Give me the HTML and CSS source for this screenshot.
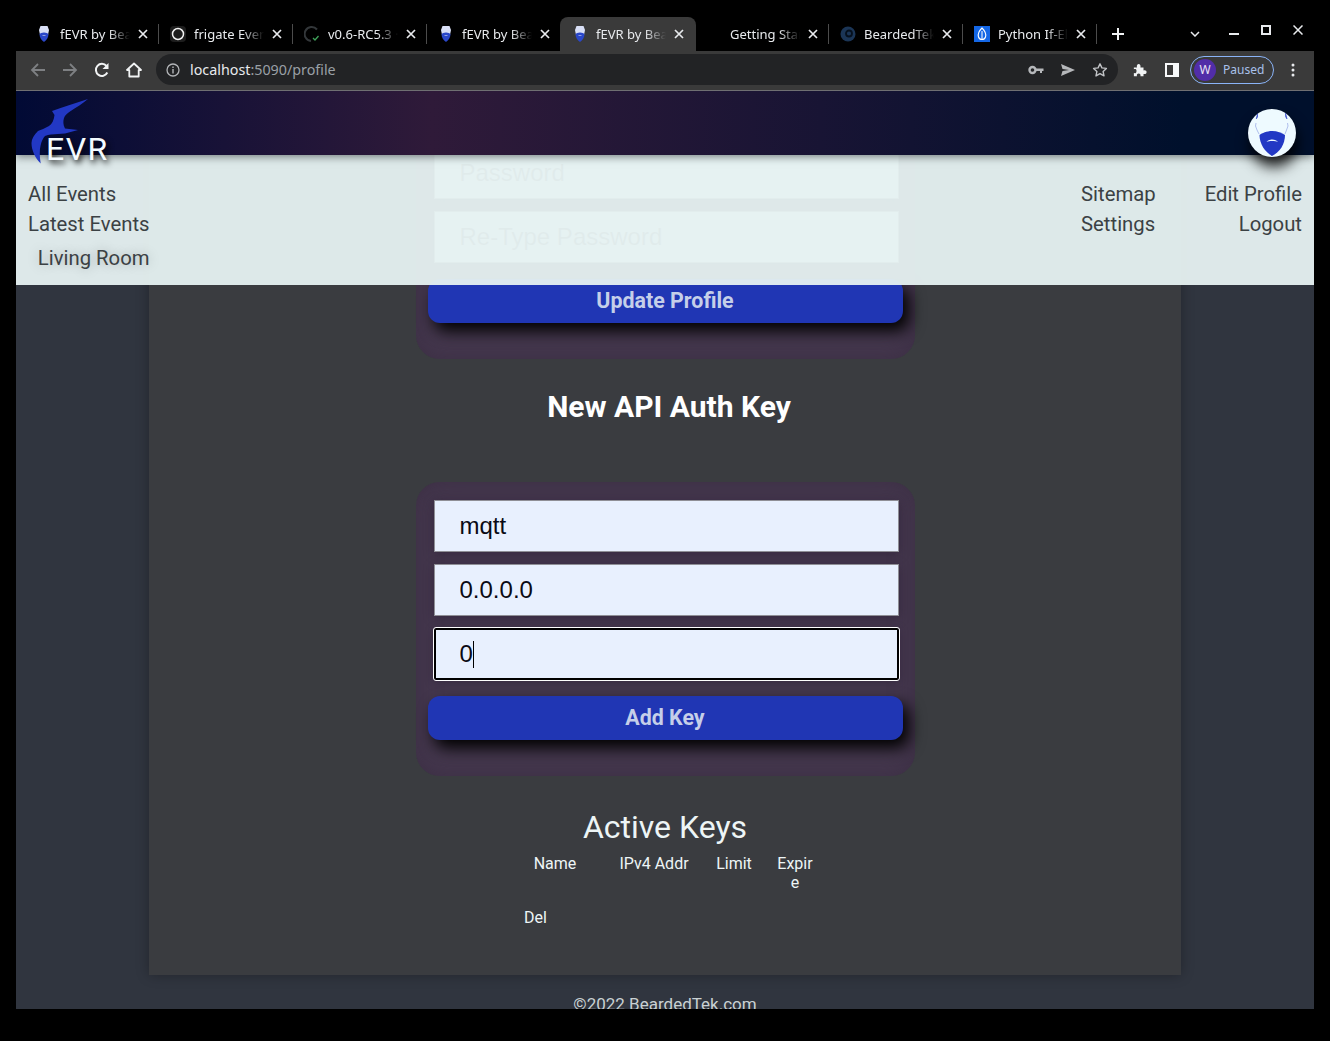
FILE: index.html
```html
<!DOCTYPE html>
<html lang="en">
<head>
    <meta charset="UTF-8">
    <meta name="viewport" content="width=device-width, initial-scale=1.0">
    <title>fEVR by BeardedTek</title>
    <link rel="stylesheet" href="styles.css">
</head>
<body>
    <svg class="defs" width="0" height="0">
        <symbol id="fav-beard" viewBox="0 0 16 16">
            <path d="M4.500 0h7l1.500 4-1 5H4L3 4z" fill="#d9dff6"/>
            <path d="M3.500 8c1-.5 2-1.500 4.500-1.500S11.500 7.500 12.500 8c0 3.500-2 6.500-4.500 8-2.500-1.500-4.500-4.500-4.500-8z" fill="#2a47c9"/>
            <path d="M5.800 10c1.400-1.300 3-1.300 4.400 0-1.400-.5-3-.5-4.400 0z" fill="#c9d3f5"/>
        </symbol>
        <symbol id="tab-x" viewBox="0 0 10 10">
            <path d="M1 1l8 8M9 1l-8 8" stroke="#e8eaed" stroke-width="1.700" fill="none"/>
        </symbol>
    </svg>

    <div class="window">
        <div class="tabstrip">
            <div class="tab">
                <svg class="favicon"><use href="#fav-beard"/></svg>
                <span class="tab-title">fEVR by BeardedTek</span>
                <svg class="tab-close"><use href="#tab-x"/></svg>
            </div>
            <div class="tab">
                <svg class="favicon" viewBox="0 0 16 16"><rect width="16" height="16" rx="4" fill="#1d1d1d"/><circle cx="8" cy="8" r="5.500" fill="none" stroke="#f2f2f2" stroke-width="1.500"/></svg>
                <span class="tab-title">frigate Events</span>
                <svg class="tab-close"><use href="#tab-x"/></svg>
            </div>
            <div class="tab">
                <svg class="favicon" viewBox="0 0 16 16"><path d="M13 3.500A7 7 0 1 0 7 15" fill="none" stroke="#33373a" stroke-width="2"/><path d="M9 12l2 2 3.500-4" fill="none" stroke="#3fa35a" stroke-width="1.300"/></svg>
                <span class="tab-title">v0.6-RC5.3 · Releases</span>
                <svg class="tab-close"><use href="#tab-x"/></svg>
            </div>
            <div class="tab tab-before-active">
                <svg class="favicon"><use href="#fav-beard"/></svg>
                <span class="tab-title">fEVR by BeardedTek</span>
                <svg class="tab-close"><use href="#tab-x"/></svg>
            </div>
            <div class="tab tab-active">
                <svg class="favicon"><use href="#fav-beard"/></svg>
                <span class="tab-title">fEVR by BeardedTek</span>
                <svg class="tab-close"><use href="#tab-x"/></svg>
            </div>
            <div class="tab">
                <span class="favicon"></span>
                <span class="tab-title">Getting Started</span>
                <svg class="tab-close"><use href="#tab-x"/></svg>
            </div>
            <div class="tab">
                <svg class="favicon" viewBox="0 0 16 16"><circle cx="8" cy="8" r="7.500" fill="#1b3556"/><circle cx="9" cy="7.500" r="3" fill="none" stroke="#06101d" stroke-width="1.800"/></svg>
                <span class="tab-title">BeardedTek</span>
                <svg class="tab-close"><use href="#tab-x"/></svg>
            </div>
            <div class="tab">
                <svg class="favicon" viewBox="0 0 16 16"><rect width="16" height="16" fill="#1467e6"/><path d="M8 2c3 3 4.500 6 3.500 9-.5 1.500-2 2.500-3.500 2.500S5 12.500 4.500 11C3.500 8 5 5 8 2z" fill="none" stroke="#fff" stroke-width="1.100"/><path d="M8 5v8" stroke="#fff"/></svg>
                <span class="tab-title">Python If-Else</span>
                <svg class="tab-close"><use href="#tab-x"/></svg>
            </div>
            <svg class="new-tab" viewBox="0 0 12 12"><path d="M6 0v12M0 6h12" stroke="#f1f3f4" stroke-width="2"/></svg>
            <div class="win-controls">
                <svg class="win-chevron" viewBox="0 0 10 6"><path d="M1 1l4 4 4-4" fill="none" stroke="#e8eaed" stroke-width="1.500"/></svg>
                <svg class="win-min" viewBox="0 0 10 2"><path d="M0 1h10" stroke="#e8eaed" stroke-width="2"/></svg>
                <svg class="win-max" viewBox="0 0 10 10"><rect x="1" y="1" width="8" height="8" fill="none" stroke="#e8eaed" stroke-width="2"/></svg>
                <svg class="win-close" viewBox="0 0 10 10"><path d="M.500.500l9 9M9.500.500l-9 9" stroke="#e8eaed" stroke-width="1.500"/></svg>
            </div>
        </div>

        <div class="toolbar">
            <svg class="tool-icon" viewBox="0 0 16 16"><path d="M15 8H2M8 2L2 8l6 6" fill="none" stroke="#7e8083" stroke-width="1.800"/></svg>
            <svg class="tool-icon" viewBox="0 0 16 16"><path d="M1 8h13M8 2l6 6-6 6" fill="none" stroke="#7e8083" stroke-width="1.800"/></svg>
            <svg class="tool-icon" viewBox="0 0 16 16"><path d="M13.300 10.500A6 6 0 1 1 12.500 4" fill="none" stroke="#f1f3f4" stroke-width="2"/><path d="M14.500 1v6h-6z" fill="#f1f3f4"/></svg>
            <svg class="tool-icon" viewBox="0 0 16 16"><path d="M8 1.500L1 8h2.300v6.500h9.400V8H15z" fill="none" stroke="#f1f3f4" stroke-width="1.800" stroke-linejoin="round"/></svg>
            <div class="omnibox">
                <svg class="omni-info" viewBox="0 0 14 14"><circle cx="7" cy="7" r="6" fill="none" stroke="#b3b5b8" stroke-width="1.300"/><path d="M7 6v4.500M7 3.500v1.500" stroke="#b3b5b8" stroke-width="1.400"/></svg>
                <span class="url"><span class="url-host">localhost</span>:5090/profile</span>
                <div class="omni-actions">
                    <svg class="omni-icon" viewBox="0 0 16 16"><circle cx="4.500" cy="8" r="3" fill="none" stroke="#b5b7ba" stroke-width="2.400"/><path d="M7 6.500h8.500v2.500H14v2h-2V9H7z" fill="#b5b7ba"/></svg>
                    <svg class="omni-icon" viewBox="0 0 16 16"><path d="M1 2l14 6-14 6 1.500-5L9 8 2.500 7z" fill="#b5b7ba"/></svg>
                    <svg class="omni-icon" viewBox="0 0 16 16"><path d="M8 1.800l1.900 4.100 4.500.5-3.300 3 .9 4.500L8 11.600l-4 2.300.9-4.500-3.300-3 4.500-.5z" fill="none" stroke="#c2c4c7" stroke-width="1.400" stroke-linejoin="round"/></svg>
                </div>
            </div>
            <svg class="ext-icon" viewBox="0 0 16 16"><path d="M1 5h3.500C4 2.500 5 1 6.500 1S9 2.500 8.500 5H12v3.500c2.500-.5 3.500.5 3.500 2s-1 2.500-3.500 2V15H8.500c.5-2-.5-3-2-3s-2.500 1-2 3H1v-3.500c2 .5 3-.5 3-2.500s-1-2.500-3-2z" fill="#f1f3f4"/></svg>
            <svg class="ext-icon" viewBox="0 0 14 14"><path d="M0 0h14v14H0zM2 2v10h6V2z" fill="#f8f9fa" fill-rule="evenodd"/></svg>
            <div class="profile-pill"><span class="profile-avatar">W</span><span class="profile-state">Paused</span></div>
            <svg class="kebab" viewBox="0 0 4 14"><circle cx="2" cy="2" r="1.500" fill="#e8eaed"/><circle cx="2" cy="7" r="1.500" fill="#e8eaed"/><circle cx="2" cy="12" r="1.500" fill="#e8eaed"/></svg>
        </div>

        <div class="viewport">
            <div class="site-nav">
                <header class="site-header">
                    <a class="logo">
                        <svg class="logo-bird" viewBox="0 0 60 68">
                            <path d="M58 1C46 5 33 9 22 13L24.500 17C24 22 22 26 19 28 15 30 11 32 8 33 4 37 1.500 41 1.500 45 1.500 52 5 60 10.700 65.500 9.500 58 9.500 52 10.500 48 11.500 43 13 40 15 38 17 37 19 36.500 21 36.500L35 35.500 48 32 35 30.500C33 27 33 23 34 20 35 17 37 15.500 40 13.500 46 9.500 52 6 58 1Z" fill="#2238c4"/>
                        </svg>
                        <span class="logo-text">EVR</span>
                    </a>
                    <div class="avatar">
                        <svg viewBox="0 0 48 48" width="48" height="48">
                            <path d="M11.500 26C14 24 19 22 24.300 22 29 22 34 24 37 26 37 35 32 43 24 47 17 43 11.500 35 11.500 26Z" fill="#2238c4"/>
                            <path d="M18.500 33C20.500 29.500 28 29.500 30 33 27 31.800 21.500 31.800 18.500 33Z" fill="#eefaff"/>
                            <path d="M9.500 4L8.300 10 9.500 8ZM37.500 4L39 10 37.700 8Z" fill="#2238c4" stroke="#2238c4" stroke-width=".5"/>
                            <path d="M8 14L7.500 17 9 21 11 25M39.500 14L40 17 38.500 21 37 25" fill="none" stroke="#6f80d8" stroke-width=".5"/>
                        </svg>
                    </div>
                </header>
                <nav class="menu">
                    <div class="menu-col">
                        <a>All Events</a>
                        <a>Latest Events</a>
                        <a class="menu-camera">Living Room</a>
                    </div>
                    <div class="menu-right">
                        <div class="menu-col">
                            <a>Sitemap</a>
                            <a>Settings</a>
                        </div>
                        <div class="menu-col menu-col-end">
                            <a>Edit Profile</a>
                            <a>Logout</a>
                        </div>
                    </div>
                </nav>
            </div>

            <main class="sheet">
                <form class="card">
                    <input class="field" type="password" placeholder="Password">
                    <input class="field" type="password" placeholder="Re-Type Password">
                    <button class="btn" type="button">Update Profile</button>
                </form>

                <h2 class="key-title">New API Auth Key</h2>

                <form class="card">
                    <input class="field field-filled" type="text" value="mqtt">
                    <input class="field field-filled" type="text" value="0.0.0.0">
                    <div class="field-wrap">
                        <input class="field field-filled field-focus" type="text" value="0">
                        <span class="caret"></span>
                    </div>
                    <button class="btn" type="button">Add Key</button>
                </form>

                <h3 class="active-title">Active Keys</h3>
                <div class="key-table">
                    <div class="key-head">Name</div>
                    <div class="key-head">IPv4 Addr</div>
                    <div class="key-head">Limit</div>
                    <div class="key-head key-expire">Expire</div>
                    <div class="key-del">Del</div>
                </div>
            </main>

            <footer class="site-footer">©2022 BeardedTek.com</footer>
        </div>
    </div>
</body>
</html>
```

FILE: styles.css
```css
body {
    margin: 0;
    background: #000;
    font-family: Roboto, sans-serif;
}

.defs {
    position: absolute;
}

.window {
    width: 1298px;
    height: 1009px;
    margin-left: 16px;
    display: flex;
    flex-direction: column;
    overflow: hidden;
}

/* browser tabs */
.tabstrip {
    height: 51px;
    flex: none;
    display: flex;
    align-items: flex-end;
    padding-left: 10px;
    box-sizing: border-box;
    background: #000;
}

.tab {
    width: 134px;
    height: 34px;
    flex: none;
    display: flex;
    align-items: center;
    box-sizing: border-box;
    padding-left: 10px;
    position: relative;
    font-family: "Noto Sans", sans-serif;
    font-size: 13px;
    color: #e8eaed;
}

.tab::after {
    content: "";
    position: absolute;
    right: 1px;
    top: 7px;
    height: 20px;
    width: 1px;
    background: #4c4c4c;
}

.tab-before-active::after,
.tab-active::after {
    display: none;
}

.tab-active {
    width: 136px;
    margin-left: -2px;
    padding-left: 12px;
    background: #3a3a3a;
    border-radius: 8px 8px 0 0;
}

.favicon {
    width: 16px;
    height: 16px;
    flex: none;
    margin-right: 8px;
}

.tab-title {
    width: 70px;
    flex: none;
    overflow: hidden;
    white-space: nowrap;
    -webkit-mask-image: linear-gradient(to right, #000 70%, transparent 100%);
    mask-image: linear-gradient(to right, #000 70%, transparent 100%);
}

.tab-close {
    width: 10px;
    height: 10px;
    margin-left: 8px;
    flex: none;
}

.new-tab {
    width: 12px;
    height: 12px;
    margin: 0 0 11px 14px;
    flex: none;
}

.win-controls {
    margin-left: auto;
    align-self: flex-start;
    display: flex;
    align-items: center;
    padding: 15px 11px 0 0;
    box-sizing: border-box;
    height: 45px;
}

.win-chevron {
    width: 10px;
    height: 6px;
    margin-top: 8px;
    margin-right: 29px;
}

.win-min {
    width: 10px;
    height: 2px;
    margin-top: 8px;
    margin-right: 22px;
}

.win-max {
    width: 10px;
    height: 10px;
    margin-right: 22px;
}

.win-close {
    width: 10px;
    height: 10px;
}

/* browser toolbar */
.toolbar {
    height: 40px;
    flex: none;
    display: flex;
    align-items: center;
    box-sizing: border-box;
    padding: 0 0 2px 14px;
    background: #3a3a3a;
    border-bottom: 1px solid #6f6f72;
}

.tool-icon {
    width: 16px;
    height: 16px;
    margin-right: 16px;
    flex: none;
}

.omnibox {
    width: 962px;
    height: 31px;
    margin-left: -2px;
    flex: none;
    display: flex;
    align-items: center;
    box-sizing: border-box;
    padding: 0 10px;
    border-radius: 16px;
    background: #222325;
}

.omni-info {
    width: 14px;
    height: 14px;
    flex: none;
}

.url {
    margin-left: 10px;
    font-family: "Noto Sans", sans-serif;
    font-size: 14.300px;
    color: #9aa0a6;
}

.url-host {
    color: #e8eaed;
}

.omni-actions {
    margin-left: auto;
    display: flex;
    gap: 16px;
}

.omni-icon {
    width: 16px;
    height: 16px;
}

.ext-icon {
    width: 14px;
    height: 14px;
    flex: none;
    margin-left: 15px;
    margin-right: 3px;
}

.profile-pill {
    width: 84px;
    height: 28px;
    margin-left: 8px;
    flex: none;
    display: flex;
    align-items: center;
    box-sizing: border-box;
    padding-left: 3px;
    border: 1px solid #8ab4f8;
    border-radius: 14px;
    font-family: "Noto Sans", sans-serif;
    font-size: 12px;
    color: #a9c1ea;
}

.profile-avatar {
    width: 22px;
    height: 22px;
    margin-right: 7px;
    border-radius: 50%;
    background: #512da8;
    color: #e8e4f4;
    text-align: center;
    line-height: 22px;
}

.kebab {
    width: 4px;
    height: 14px;
    margin-left: 17px;
    flex: none;
}

/* page */
.viewport {
    flex: 1;
    position: relative;
    overflow: hidden;
    background: #30353f;
}

.site-nav {
    position: absolute;
    top: 0;
    left: 0;
    right: 0;
    z-index: 5;
}

.site-header {
    height: 64px;
    display: flex;
    justify-content: space-between;
    align-items: flex-start;
    box-sizing: border-box;
    padding: 7px 18px 0 14px;
    background: linear-gradient(to right, #010a35, #2f1a39 32%, #181434 62%, #00102c 90%);
    position: relative;
    z-index: 1;
    box-shadow: 0 2px 8px rgba(50, 60, 60, 0.6);
}

.logo {
    width: 82px;
    height: 68px;
    position: relative;
}

.logo-bird {
    width: 60px;
    height: 68px;
    display: block;
}

.logo-text {
    position: absolute;
    left: 16px;
    top: 31px;
    font-size: 32px;
    letter-spacing: 1.500px;
    line-height: 40px;
    color: #f4fbff;
    text-shadow: 2px 3px 6px #000;
}

.avatar {
    width: 48px;
    height: 48px;
    margin-top: 11px;
    border-radius: 50%;
    background: #eefaff;
    overflow: hidden;
    box-shadow: 2px 10px 14px rgba(0, 0, 0, 0.85);
}

.avatar svg {
    display: block;
}

.menu {
    height: 130px;
    display: flex;
    justify-content: space-between;
    box-sizing: border-box;
    padding: 24px 12px 0;
    background: rgba(230, 241, 241, 0.953);
    font-size: 20.300px;
    line-height: 30px;
    color: #3b4144;
}

.menu-col {
    display: flex;
    flex-direction: column;
}

.menu-col-end {
    align-items: flex-end;
}

.menu-camera {
    margin-top: 4px;
    align-self: flex-end;
    text-shadow: 0 0 12px rgba(0, 0, 0, 0.25);
}

.menu-right {
    display: flex;
    gap: 49px;
}

.sheet {
    width: 1032px;
    margin: 0 auto;
    height: 884px;
    box-sizing: border-box;
    padding-top: 38px;
    display: flex;
    flex-direction: column;
    background: #3a3c40;
    box-shadow: 0 0 12px rgba(0, 0, 0, 0.3);
    color: #edf5f6;
}

.card {
    width: 499px;
    margin: 0 auto;
    flex: none;
    display: flex;
    flex-direction: column;
    align-items: center;
    gap: 12px;
    box-sizing: border-box;
    padding: 18px 0 36px;
    border-radius: 24px;
    background: #45384e;
    box-shadow: inset 0 0 24px rgba(50, 36, 58, 0.5);
}

.field-wrap {
    position: relative;
    width: 465px;
    height: 52px;
    flex: none;
    margin-left: 2px;
}

.field {
    width: 465px;
    height: 52px;
    flex: none;
    margin-left: 2px;
    box-sizing: border-box;
    padding: 0 24px 0 25px;
    border: 1px solid #8f8f96;
    border-radius: 0;
    background: #e8f0fe;
    font-family: "Liberation Sans", Arial, sans-serif;
    font-size: 24px;
    color: #0a0a14;
    box-shadow: 0 2px 10px rgba(30, 18, 40, 0.4);
}

.field-focus {
    margin-left: 0;
    padding-left: 24px;
    border: 2px solid #000;
    outline: 1px solid #fff;
    border-radius: 2px;
}

.caret {
    position: absolute;
    left: 39px;
    top: 13px;
    width: 1px;
    height: 27px;
    background: #000;
}

.btn {
    width: 475px;
    height: 44px;
    flex: none;
    margin-top: 4px;
    padding: 0 0 2px;
    border: none;
    border-radius: 12px;
    background: #2036b4;
    font-family: Roboto, sans-serif;
    font-size: 21.400px;
    font-weight: 700;
    color: #c5cfe9;
    box-shadow: 6px 8px 16px #000;
}

.key-title {
    margin: 30px 0 58px 8px;
    font-size: 30px;
    line-height: 35px;
    font-weight: 700;
    text-align: center;
    color: #fff;
}

.active-title {
    margin: 32px 0 8px;
    font-size: 32px;
    line-height: 38px;
    font-weight: 400;
    text-align: center;
}

.key-table {
    width: 320px;
    margin-left: 365px;
    display: grid;
    grid-template-columns: 82px 116px 44px 78px;
    row-gap: 16px;
    font-size: 16px;
    line-height: 19px;
}

.key-head {
    text-align: center;
}

.key-expire {
    padding: 0 20px;
    word-break: break-all;
}

.key-del {
    grid-column: 1;
    padding-left: 10px;
}

.site-footer {
    margin-top: 19px;
    font-size: 17px;
    line-height: 21px;
    text-align: center;
    color: #c9d1d3;
}
```
